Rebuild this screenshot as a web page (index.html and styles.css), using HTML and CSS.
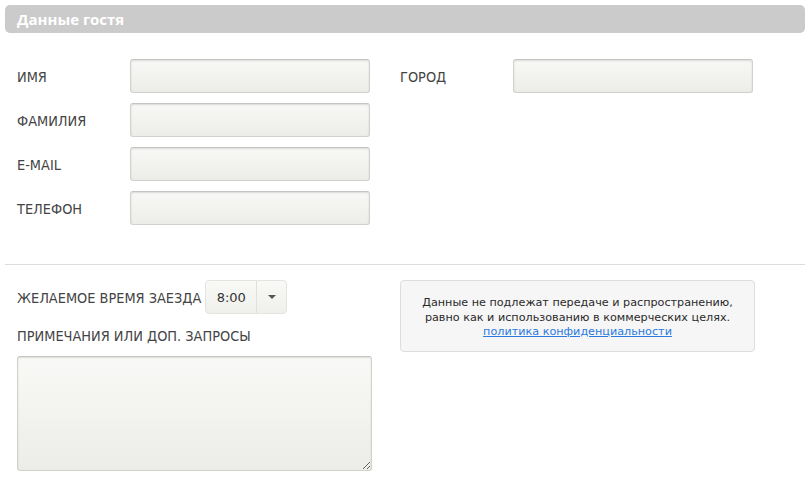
FILE: index.html
```html
<!DOCTYPE html>
<html lang="ru">
<head>
<meta charset="utf-8">
<link rel="stylesheet" href="styles.css">
</head>
<body>
<div class="panel">
  <div class="panel-head">Данные гостя</div>
  <div class="guest">
    <div class="col">
      <div class="row"><label class="lbl">ИМЯ</label><input class="field" type="text"></div>
      <div class="row"><label class="lbl">ФАМИЛИЯ</label><input class="field" type="text"></div>
      <div class="row"><label class="lbl">E-MAIL</label><input class="field" type="text"></div>
      <div class="row"><label class="lbl">ТЕЛЕФОН</label><input class="field" type="text"></div>
    </div>
    <div class="col">
      <div class="row"><label class="lbl">ГОРОД</label><input class="field" type="text"></div>
    </div>
  </div>
  <hr class="divider">
  <div class="extra">
    <div class="col-left">
      <div class="time-row">
        <span class="lbl">ЖЕЛАЕМОЕ ВРЕМЯ ЗАЕЗДА</span>
        <div class="select"><span class="select-val">8:00</span><span class="select-btn"><span class="caret"></span></span></div>
      </div>
      <div class="notes-lbl lbl">ПРИМЕЧАНИЯ ИЛИ ДОП. ЗАПРОСЫ</div>
      <textarea class="notes"></textarea>
    </div>
    <div class="info">
      Данные не подлежат передаче и распространению,<br>
      равно как и использованию в коммерческих целях.<br>
      <a href="#" class="link">политика конфиденциальности</a>
    </div>
  </div>
</div>
</body>
</html>
```

FILE: styles.css
```css
html, body { margin: 0; padding: 0; background: #fff; }
body { padding: 5px; font-family: "DejaVu Sans", sans-serif; }
.panel { width: 800px; }
.panel-head {
  height: 28px;
  line-height: 28px;
  background: #cbcbcb;
  border-radius: 5px;
  color: #fff;
  font-family: "Open Sans", "DejaVu Sans", sans-serif;
  font-weight: 700;
  font-size: 15px;
  padding-left: 12px;
}
.guest { display: flex; padding: 26px 0 0 12px; }
.col { display: flex; flex-direction: column; gap: 10px; width: 383px; }
.row { display: flex; align-items: center; height: 34px; }
.lbl {
  font-family: "DejaVu Sans Condensed", "DejaVu Sans", sans-serif;
  font-stretch: condensed;
  font-size: 14.4px;
  color: #444;
}
.row .lbl { width: 113px; padding-top: 2px; }
.field {
  box-sizing: border-box;
  width: 240px;
  height: 34px;
  margin: 0;
  border: 1px solid #d2d2cc;
  border-top-color: #c4c4c0;
  border-radius: 3px;
  background: linear-gradient(#f8f8f6, #ecece8);
  box-shadow: inset 0 1px 2px rgba(0,0,0,0.12);
}
.divider { margin: 39px 0 0 0; border: 0; border-top: 1px solid #ddd; height: 0; }
.extra { display: flex; padding: 15px 0 0 12px; }
.col-left { width: 383px; }
.time-row { display: flex; align-items: center; gap: 4px; height: 34px; }
.time-row .lbl { padding-top: 2px; }
.select {
  display: flex;
  height: 34px;
  box-sizing: border-box;
  border: 1px solid #e4e4e0;
  border-radius: 4px;
  background: linear-gradient(#f9f9f7, #efefeb);
  font-family: "DejaVu Sans", sans-serif;
  font-size: 13px;
  color: #333;
}
.select-val { width: 50px; display: flex; align-items: center; justify-content: center; border-right: 1px solid #e0e0dc; }
.select-btn { width: 29px; display: flex; align-items: center; justify-content: center; }
.caret { width: 0; height: 0; border-left: 4px solid transparent; border-right: 4px solid transparent; border-top: 4px solid #555; }
.notes-lbl { margin-top: 14px; height: 20px; }
.notes {
  display: block;
  box-sizing: border-box;
  margin-top: 8px;
  width: 355px;
  height: 115px;
  border: 1px solid #d2d2cc;
  border-top-color: #c4c4c0;
  border-radius: 3px;
  background: linear-gradient(#f9f9f7, #ecece8);
  box-shadow: inset 0 1px 2px rgba(0,0,0,0.12);
}
.info {
  box-sizing: border-box;
  width: 355px;
  height: 72px;
  border: 1px solid #ddd;
  border-radius: 4px;
  background: #f6f6f6;
  text-align: center;
  font-family: "DejaVu Sans", sans-serif;
  font-size: 11.2px;
  line-height: 14.5px;
  color: #2a2a2a;
  padding-top: 15px;
}
.link { color: #2a7ae2; }
```
